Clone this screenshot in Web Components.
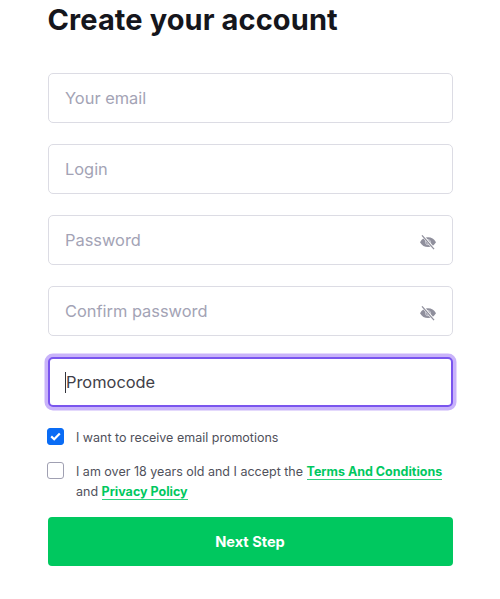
<!DOCTYPE html>
<html>
<head>
<meta charset="utf-8">
<style>
html, body { margin: 0; padding: 0; background: #fff; overflow: hidden; }
body { font-family: Inter, "Liberation Sans", sans-serif; }
</style>
</head>
<body>
<signup-form>
  <form-field placeholder="Your email"></form-field>
  <form-field placeholder="Login"></form-field>
  <form-field placeholder="Password" eye></form-field>
  <form-field placeholder="Confirm password" eye></form-field>
  <form-field value="Promocode" focused></form-field>
  <form-check checked>I want to receive email promotions</form-check>
  <form-check>I am over 18 years old and I accept the <a href="#">Terms And Conditions</a> and <a href="#">Privacy Policy</a></form-check>
  <next-button>Next Step</next-button>
</signup-form>

<script>
const signup_template = document.createElement('template');
signup_template.innerHTML = /*html*/ `
<style>
:host {
  display: block;
  width: 405px;
  margin-left: 47.5px;
  color: #15161c;
}
h1 {
  margin: 0;
  height: 41px;
  font-size: 29px;
  line-height: 40px;
  font-weight: 700;
  letter-spacing: 0.1px;
}
.fields {
  margin-top: 32px;
  display: flex;
  flex-direction: column;
}
</style>
<h1>Create your account</h1>
<div class="fields"><slot></slot></div>
`;

class SignupForm extends HTMLElement {
    constructor() {
        super();
        this.attachShadow({ mode: "open" });
        this.shadowRoot.appendChild(signup_template.content.cloneNode(true));
    }
}
window.customElements.define('signup-form', SignupForm);

const field_template = document.createElement('template');
field_template.innerHTML = /*html*/ `
<style>
:host {
  display: block;
  margin-bottom: 21px;
}
.box {
  box-sizing: border-box;
  height: 50px;
  border: 1px solid #dcdce4;
  border-radius: 5px;
  padding: 0 15px 0 16.500px;
  display: flex;
  align-items: center;
  justify-content: space-between;
  background: #fff;
  font-size: 16.400px;
  color: #a3a3b5;
}
:host([focused]) .box {
  border: 2px solid #7a55ee;
  box-shadow: 0 0 0 3.500px #c9b3fa;
  padding-left: 15.500px;
  color: #3f4048;
}
:host([focused]) .text {
  border-left: 1px solid #33343c;
  line-height: 21px;
  margin-top: 1px;
}
svg { width: 18px; height: 18px; margin-top: 3px; }
</style>
<span class="text"></span>
`;

class FormField extends HTMLElement {
    constructor() {
        super();
        this.attachShadow({ mode: "open" });
        let box = document.createElement('div');
        box.className = 'box';
        box.appendChild(field_template.content.cloneNode(true));
        box.querySelector('.text').innerText = this.getAttribute('placeholder') || this.getAttribute('value');
        if (this.hasAttribute('eye')) {
            box.insertAdjacentHTML('beforeend', `<svg viewBox="0 0 18 18">
              <path fill="#8f8f9c" d="M1 9.200C2.800 6 5.600 4.300 9 4.300s6.200 1.700 8 4.900c-1.800 3.200-4.600 4.900-8 4.900S2.800 12.400 1 9.200z"/>
              <circle cx="9" cy="9.200" r="2.600" fill="none" stroke="#c9c9d2" stroke-width="1"/>
              <path d="M3 1.800 15.400 16.400" stroke="#fff" stroke-width="2.600"/>
              <path d="M3 2.300 15 16.200" stroke="#8f8f9c" stroke-width="1.300"/>
            </svg>`);
        }
        this.shadowRoot.appendChild(field_template.content.querySelector('style').cloneNode(true));
        this.shadowRoot.appendChild(box);
    }
}
window.customElements.define('form-field', FormField);

const check_template = document.createElement('template');
check_template.innerHTML = /*html*/ `
<style>
:host {
  display: flex;
  gap: 12px;
  margin-bottom: 14px;
  margin-left: -0.5px;
  font-size: 12.500px;
  line-height: 20px;
  color: #50515b;
}
.mark {
  flex: none;
  box-sizing: border-box;
  width: 17px;
  height: 17px;
  border: 1.500px solid #a0a0b2;
  border-radius: 3px;
  background: #fff;
  display: flex;
  align-items: center;
  justify-content: center;
}
:host([checked]) .mark {
  background: #0a6cf5;
  border-color: #0a6cf5;
}
.mark svg { width: 11px; height: 9px; display: none; }
:host([checked]) .mark svg { display: block; }
::slotted(a) {
  color: #00c85f;
  font-weight: 700;
  text-decoration: none;
  border-bottom: 1px solid #30d27e;
}
</style>
<span class="mark"><svg viewBox="0 0 11 9"><path d="M1.200 4.400 4.200 7.300 9.800 1.500" fill="none" stroke="#fff" stroke-width="2.200"/></svg></span>
<span class="label"><slot></slot></span>
`;

class FormCheck extends HTMLElement {
    constructor() {
        super();
        this.attachShadow({ mode: "open" });
        this.shadowRoot.appendChild(check_template.content.cloneNode(true));
    }
}
window.customElements.define('form-check', FormCheck);

const button_template = document.createElement('template');
button_template.innerHTML = /*html*/ `
<style>
:host {
  display: block;
  margin-top: 1px;
}
button {
  display: block;
  width: 100%;
  height: 49px;
  border: 0;
  border-radius: 4px;
  background: #00c85f;
  color: #fff;
  font: 700 14.600px Inter, "Liberation Sans", sans-serif;
}
</style>
<button type="button"><slot></slot></button>
`;

class NextButton extends HTMLElement {
    constructor() {
        super();
        this.attachShadow({ mode: "open" });
        this.shadowRoot.appendChild(button_template.content.cloneNode(true));
    }
}
window.customElements.define('next-button', NextButton);
</script>
</body>
</html>
